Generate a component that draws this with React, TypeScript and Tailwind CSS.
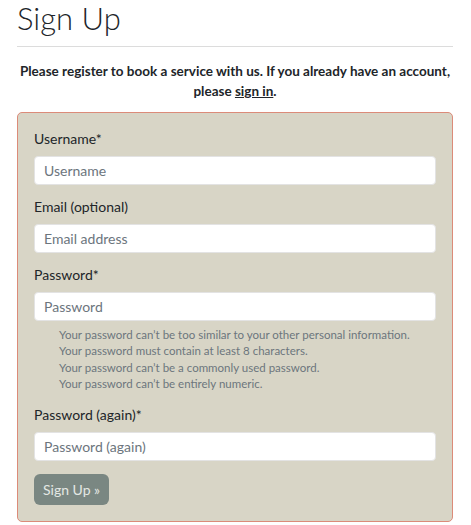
import React from "react";

const font = { fontFamily: 'Lato, "Open Sans", sans-serif' };

function Field({ label, placeholder, children }: { label: string; placeholder: string; children?: React.ReactNode }) {
  return (
    <div className="flex flex-col">
      <label className="text-[14px] leading-[20px] text-[#212529]">{label}</label>
      <input
        placeholder={placeholder}
        className="mt-[7px] h-[29px] w-full rounded-[4px] border border-[#e3e3e3] bg-white px-[9px] text-[14px] text-[#212529] placeholder:text-[#6c757d] outline-none"
      />
      {children}
    </div>
  );
}

export default function App() {
  return (
    <div className="w-[471px] bg-white text-[#212529]" style={font}>
      <div className="px-[17px] pr-[18px]">
        <h1 className="text-[31px] font-light leading-[36px] text-[#212529]">Sign Up</h1>
        <hr className="mt-[10px] border-t border-[#dcdcdc]" />
        <p className="mt-[14px] text-center text-[13.5px] font-bold leading-[20px]">
          Please register to book a service with us. If you already have an account, please{" "}
          <a className="underline">sign in</a>.
        </p>
        <div className="mt-[11px] rounded-[5px] border border-[#dc8b79] bg-[#d8d5c6] px-[16px] pt-[16px] pb-[16px]">
          <div className="flex flex-col gap-[12px]">
            <Field label="Username*" placeholder="Username" />
            <Field label="Email (optional)" placeholder="Email address" />
            <Field label="Password*" placeholder="Password">
              <ul className="mt-[6px] mb-[1px] pl-[25px] text-[11.5px] leading-[16.3px] text-[#6c757d]">
                <li>Your password can’t be too similar to your other personal information.</li>
                <li>Your password must contain at least 8 characters.</li>
                <li>Your password can’t be a commonly used password.</li>
                <li>Your password can’t be entirely numeric.</li>
              </ul>
            </Field>
            <Field label="Password (again)*" placeholder="Password (again)" />
          </div>
          <button className="mt-[13px] h-[31px] rounded-[6px] bg-[#7a8782] px-[9px] text-[14px] text-[#e4e8e4]">
            Sign Up »
          </button>
        </div>
      </div>
    </div>
  );
}
